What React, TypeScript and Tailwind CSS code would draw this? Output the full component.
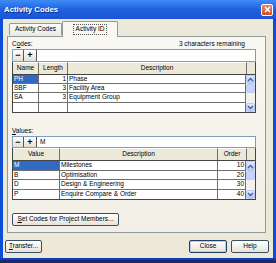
import React from "react";

const codes = [
  { name: "PH", length: "1", desc: "Phase" },
  { name: "SBF", length: "3", desc: "Facility Area" },
  { name: "SA", length: "3", desc: "Equipment Group" },
  { name: "", length: "", desc: "" },
];
const codeRows = ["h-[9px]", "h-[9px]", "h-[10px]", "h-[9px]"];

const values = [
  { value: "M", desc: "Milestones", order: "10" },
  { value: "B", desc: "Optimisation", order: "20" },
  { value: "D", desc: "Design & Engineering", order: "30" },
  { value: "P", desc: "Enquire Compare & Order", order: "40" },
];
const valueRows = ["h-[10px]", "h-[9px]", "h-[10px]", "h-[9px]"];

function Chevron({ up }: { up?: boolean }) {
  return (
    <svg width="7" height="5" viewBox="0 0 7 5">
      <path
        d={up ? "M1 4 L3.5 1.5 L6 4" : "M1 1 L3.5 3.5 L6 1"}
        fill="none"
        stroke="#4d6185"
        strokeWidth="1.4"
      />
    </svg>
  );
}

// XP style vertical scrollbar, one slot per row
function ScrollBar({ rows }: { rows: string[] }) {
  return (
    <div className="w-[10px] flex flex-col bg-[#f3f1ec] border-l border-[#6f6f6f]">
      <div className={`${rows[0]} flex items-center justify-center rounded-[2px] bg-gradient-to-b from-[#e1eafe] to-[#b4c8f6] border border-[#b7cbf5]`}>
        <Chevron up />
      </div>
      <div className={`${rows[1]} rounded-[2px] bg-[#c5d5fc] border border-[#b7cbf5]`} />
      <div className={`${rows[2]}`} />
      <div className={`${rows[3]} flex items-center justify-center rounded-[2px] bg-gradient-to-b from-[#e1eafe] to-[#b4c8f6] border border-[#b7cbf5]`}>
        <Chevron />
      </div>
    </div>
  );
}

function Toolbar({ text, h }: { text?: string; h: string }) {
  return (
    <div className={`${h} flex border border-[#7f9db9] bg-white`}>
      <div className="w-[11px] flex items-center justify-center bg-gradient-to-b from-white to-[#e3e0d2] border-r border-[#555] font-bold text-[9px] leading-none">
        −
      </div>
      <div className="w-[13px] flex items-center justify-center bg-gradient-to-b from-white to-[#e3e0d2] border-r border-[#555] font-bold text-[9px] leading-none">
        +
      </div>
      <div className="flex-1 flex items-center pl-[3px]">{text}</div>
    </div>
  );
}

function HeaderCell({ w, label }: { w: string; label: string }) {
  return (
    <div className={`${w} flex items-center justify-center border-r border-[#6f6f6f] border-t border-t-white`}>
      {label}
    </div>
  );
}

function Button({ w, label, def }: { w: string; label: React.ReactNode; def?: boolean }) {
  return (
    <div
      className={`${w} h-[13px] flex items-center justify-center rounded-[2px] bg-gradient-to-b from-white to-[#e6e3d6] border ${
        def ? "border-[#1f3f66] shadow-[inset_0_0_0_1px_#b9cdef]" : "border-[#3a4e66]"
      }`}
    >
      {label}
    </div>
  );
}

export default function App() {
  return (
    <div className="w-[276px] h-[263px] overflow-hidden flex flex-col bg-[#0c4fd6] font-['Liberation_Sans',Arial,sans-serif] text-[6.5px] leading-none text-black">
      {/* Title bar */}
      <div className="h-[19px] flex items-center justify-between pl-[4px] pr-[3px] bg-gradient-to-b from-[#3f8cf6] via-[#2160e0] to-[#1a54d4]">
        <span className="text-white font-bold text-[7.8px] [text-shadow:1px_1px_0_#0a2f8a]">Activity Codes</span>
        <div className="w-[12px] h-[12px] flex items-center justify-center rounded-[2px] border border-white bg-gradient-to-b from-[#e8876a] to-[#d24a22]">
          <svg width="7" height="7" viewBox="0 0 7 7">
            <path d="M1 1 L6 6 M6 1 L1 6" stroke="white" strokeWidth="1.5" />
          </svg>
        </div>
      </div>

      <div className="flex-1 flex px-[3px]">
        <div className="flex-1 flex flex-col bg-[#ece9d8]">
          {/* Tabs */}
          <div className="h-[17px] flex items-end pl-[6px]">
            <div className="w-[53px] h-[12px] mb-[1px] flex items-center justify-center border border-b-0 border-[#919b9c] rounded-t-[2px] bg-gradient-to-b from-[#fbfbf9] to-[#ecebe5]">
              Activity Codes
            </div>
            <div className="w-[56px] h-[16px] -mb-[1px] flex items-center justify-center border border-b-0 border-[#919b9c] rounded-t-[2px] bg-[#f8f7f2] relative z-10">
              <span className="px-[2px] py-[1px] border border-dotted border-[#555]">Activity ID</span>
            </div>
          </div>

          {/* Panel */}
          <div className="ml-[4px] w-[259px] h-[197px] border border-[#919b9c] bg-gradient-to-b from-[#f8f7f2] to-[#f1efe6] pl-[4px] pr-[9px] pt-[3px] flex flex-col">
            <div className="h-[9px] flex items-center justify-between">
              <span>
                C<span className="underline">o</span>des:
              </span>
              <span className="mr-[11px]">3 characters remaining</span>
            </div>
            <Toolbar h="h-[13px]" />
            <div className="border border-t-0 border-[#444] bg-white">
              <div className="h-[13px] flex bg-[#ece9d8] border-b border-[#444]">
                <HeaderCell w="w-[26px]" label="Name" />
                <HeaderCell w="w-[29px]" label="Length" />
                <HeaderCell w="w-[179px]" label="Description" />
                <div className="flex-1" />
              </div>
              <div className="flex">
                <div className="flex-1 flex flex-col">
                  {codes.map((c, i) => (
                    <div key={i} className={`${codeRows[i]} flex border-b border-[#6f6f6f] last:border-b-0`}>
                      <div className={`w-[26px] flex items-center pl-[1px] border-r border-[#6f6f6f] ${i === 0 ? "bg-[#316ac5] text-white" : ""}`}>
                        {c.name}
                      </div>
                      <div className="w-[29px] flex items-center justify-end pr-[1px] border-r border-[#6f6f6f]">{c.length}</div>
                      <div className="flex-1 flex items-center pl-[1px]">{c.desc}</div>
                    </div>
                  ))}
                </div>
                <ScrollBar rows={codeRows} />
              </div>
            </div>

            <div className="mt-[14px] h-[9px] flex items-center">
              <span>
                <span className="underline">V</span>alues:
              </span>
            </div>
            <Toolbar h="h-[12px]" text="M" />
            <div className="border border-t-0 border-[#444] bg-white">
              <div className="h-[13px] flex bg-[#ece9d8] border-b border-[#444]">
                <HeaderCell w="w-[47px]" label="Value" />
                <HeaderCell w="w-[158px]" label="Description" />
                <HeaderCell w="w-[29px]" label="Order" />
                <div className="flex-1" />
              </div>
              <div className="flex">
                <div className="flex-1 flex flex-col">
                  {values.map((v, i) => (
                    <div key={i} className={`${valueRows[i]} flex border-b border-[#6f6f6f] last:border-b-0`}>
                      <div className={`w-[47px] flex items-center pl-[1px] border-r border-[#6f6f6f] ${i === 0 ? "bg-[#316ac5] text-white" : ""}`}>
                        {v.value}
                      </div>
                      <div className="w-[158px] flex items-center pl-[1px] border-r border-[#6f6f6f]">{v.desc}</div>
                      <div className="flex-1 flex items-center justify-end pr-[1px]">{v.order}</div>
                    </div>
                  ))}
                </div>
                <ScrollBar rows={valueRows} />
              </div>
            </div>

            <div className="mt-[13px]">
              <Button
                w="w-[107px]"
                label={
                  <span>
                    <span className="underline">S</span>et Codes for Project Members...
                  </span>
                }
              />
            </div>
          </div>

          {/* Bottom buttons */}
          <div className="mt-[7px] flex pl-[2px] pr-[4px]">
            <Button
              w="w-[37px]"
              label={
                <span>
                  <span className="underline">T</span>ransfer...
                </span>
              }
            />
            <div className="flex-1" />
            <Button w="w-[38px]" label="Close" def />
            <div className="w-[4px]" />
            <Button w="w-[38px]" label="Help" />
          </div>
        </div>
      </div>
      <div className="h-[2px] bg-[#0c3fb8]" />
      <div className="h-[3px] bg-[#1b2a6b]" />
    </div>
  );
}
